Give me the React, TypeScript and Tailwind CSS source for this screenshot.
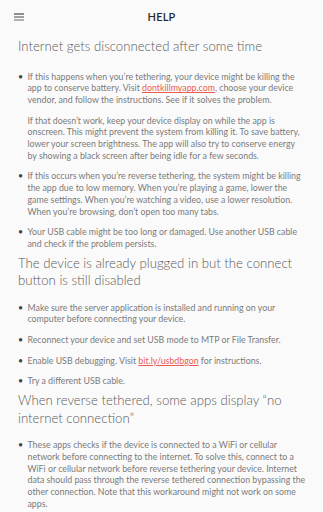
import React from "react";

const Bullet = ({ children }: { children: React.ReactNode }) => (
  <li className="flex gap-0">
    <span className="w-[9.5px] shrink-0 text-[#444] leading-[11.7px]">•</span>
    <div className="flex flex-col gap-[9px]">{children}</div>
  </li>
);

const Link = ({ children }: { children: React.ReactNode }) => (
  <span className="text-[#ec5a52] underline">{children}</span>
);

export default function App() {
  return (
    <div
      className="w-[323px] h-[512px] overflow-hidden bg-[#fafafa]"
      style={{ fontFamily: "Lato, 'Noto Sans', sans-serif" }}
    >
      <div className="h-[34px] flex items-center relative">
        <svg className="absolute left-[14px] top-[13px]" width="10" height="8" viewBox="0 0 10 8">
          <rect x="0" y="0.5" width="10" height="1" fill="#222" />
          <rect x="0" y="3.5" width="10" height="1" fill="#444" />
          <rect x="0" y="6.5" width="10" height="1" fill="#666" />
        </svg>
        <div className="w-full text-center text-[11px] font-semibold text-[#2a2a2a] tracking-[0.2px]">HELP</div>
      </div>
      <div className="pl-[18px] pr-[15px] text-[#7a7a7a]">
        <h2 className="text-[13.2px] leading-[17.5px] font-light text-[#5a5a5a] mt-[4px] mb-[15px]">
          Internet gets disconnected after some time
        </h2>
        <ul className="flex flex-col gap-[9px] text-[8.8px] leading-[11.7px]">
          <Bullet>
            <p>
              If this happens when you’re tethering, your device might be killing the app to conserve battery. Visit{" "}
              <Link>dontkillmyapp.com</Link>, choose your device vendor, and follow the instructions. See if it solves the problem.
            </p>
            <p className="pr-[6px]">
              If that doesn’t work, keep your device display on while the app is onscreen. This might prevent the system from killing it. To save battery, lower your screen brightness. The app will also try to conserve energy by showing a black screen after being idle for a few seconds.
            </p>
          </Bullet>
          <Bullet>
            <p>
              If this occurs when you’re reverse tethering, the system might be killing the app due to low memory. When you’re playing a game, lower the game settings. When you’re watching a video, use a lower resolution. When you’re browsing, don’t open too many tabs.
            </p>
          </Bullet>
          <Bullet>
            <p>Your USB cable might be too long or damaged. Use another USB cable and check if the problem persists.</p>
          </Bullet>
        </ul>
        <h2 className="text-[13.2px] leading-[17.5px] font-light text-[#5a5a5a] mt-[5px] mb-[12px]">
          The device is already plugged in but the connect button is still disabled
        </h2>
        <ul className="flex flex-col gap-[9px] text-[8.8px] leading-[11.7px]">
          <Bullet>
            <p>Make sure the server application is installed and running on your computer before connecting your device.</p>
          </Bullet>
          <Bullet>
            <p>Reconnect your device and set USB mode to MTP or File Transfer.</p>
          </Bullet>
          <Bullet>
            <p>
              Enable USB debugging. Visit <Link>bit.ly/usbdbgon</Link> for instructions.
            </p>
          </Bullet>
          <Bullet>
            <p>Try a different USB cable.</p>
          </Bullet>
        </ul>
        <h2 className="text-[13.2px] leading-[17.5px] font-light text-[#5a5a5a] mt-[5px] mb-[12px]">
          When reverse tethered, some apps display “no internet connection”
        </h2>
        <ul className="flex flex-col gap-[9px] text-[8.8px] leading-[11.7px]">
          <Bullet>
            <p>
              These apps checks if the device is connected to a WiFi or cellular network before connecting to the internet. To solve this, connect to a WiFi or cellular network before reverse tethering your device. Internet data should pass through the reverse tethered connection bypassing the other connection. Note that this workaround might not work on some apps.
            </p>
          </Bullet>
        </ul>
      </div>
    </div>
  );
}
